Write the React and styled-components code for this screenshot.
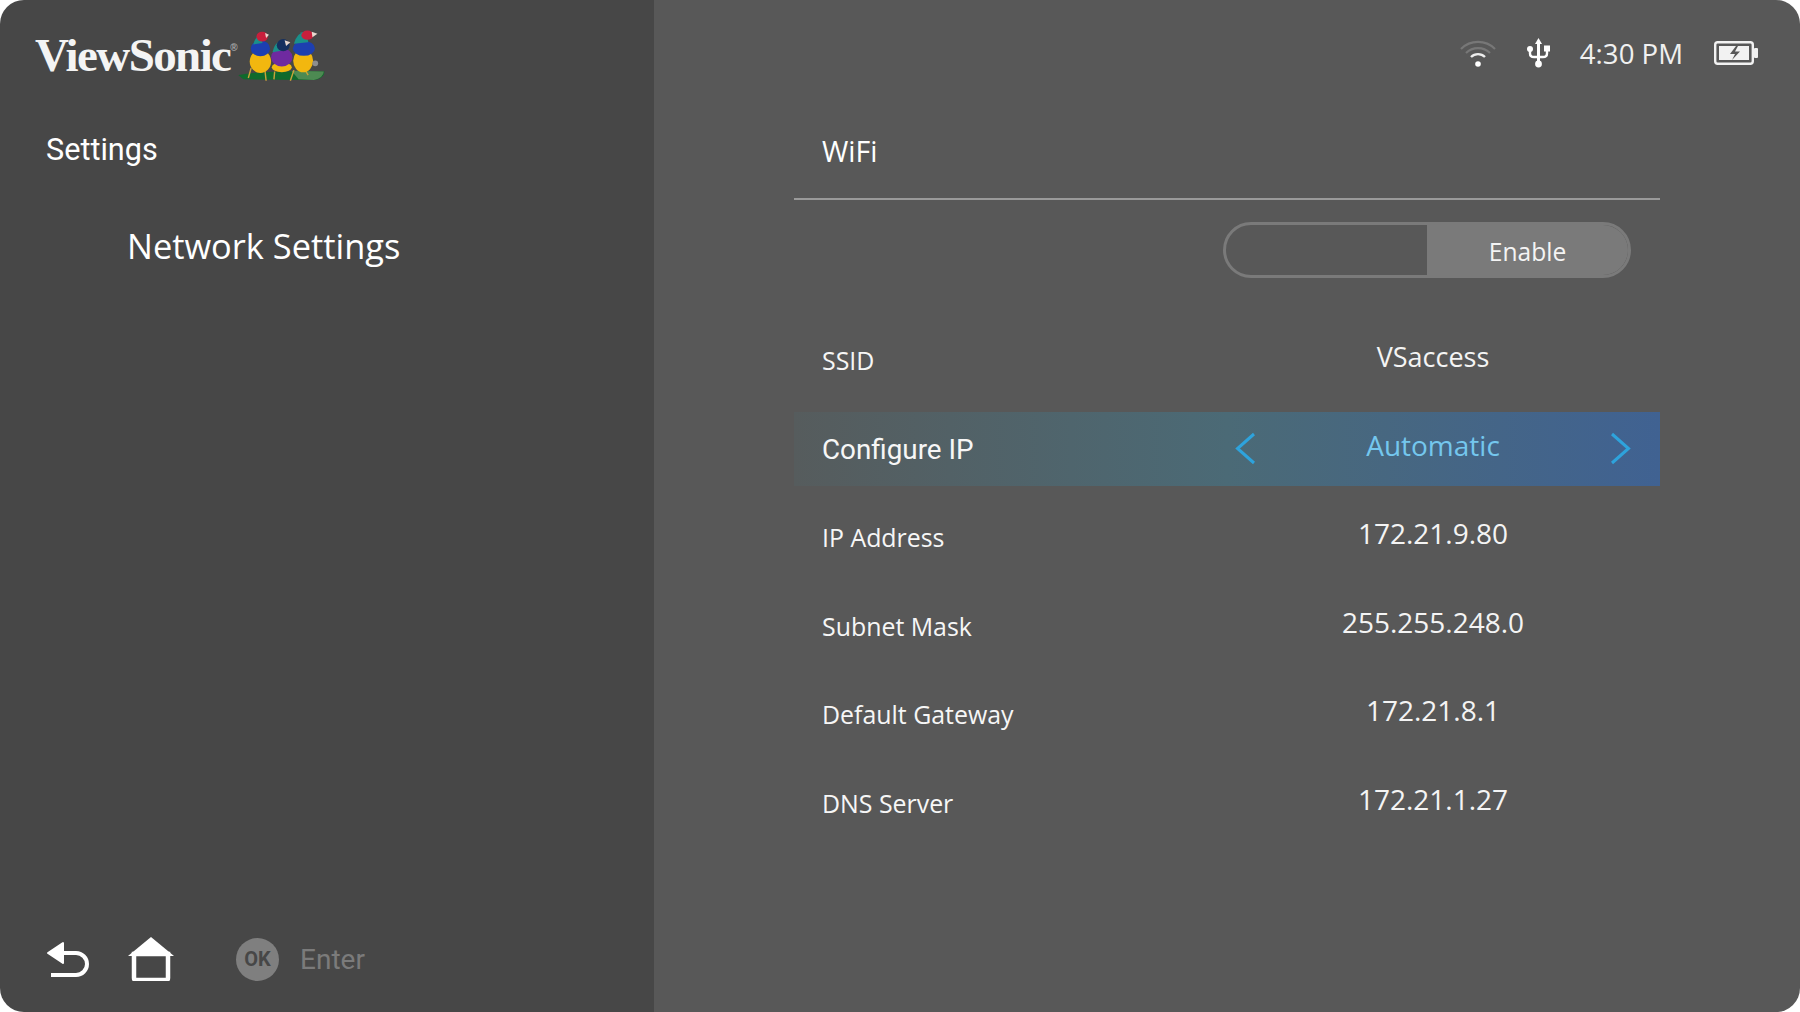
import React from "react";
import styled, { createGlobalStyle } from "styled-components";

const Global = createGlobalStyle`
  html, body {
    margin: 0;
    padding: 0;
    background: #fff;
  }
`;

const Screen = styled.div`
  display: grid;
  grid-template-columns: 654px 1fr;
  width: 1800px;
  height: 1012px;
  border-radius: 24px;
  overflow: hidden;
  color: #fff;
  font-family: "Open Sans", sans-serif;
`;

const Sidebar = styled.aside`
  display: flex;
  flex-direction: column;
  background: #474747;
`;

const LogoBar = styled.div`
  display: flex;
  align-items: center;
  height: 106px;
  padding: 3px 0 0 35px;
  box-sizing: border-box;
`;

const LogoText = styled.span`
  font-family: "Liberation Serif", serif;
  font-weight: 700;
  font-size: 47px;
  letter-spacing: -1.6px;
  color: #f4f4f4;
`;

const LogoMark = styled.sup`
  font-family: "Liberation Sans", sans-serif;
  font-size: 10px;
  color: #aaa;
  letter-spacing: 0;
  vertical-align: 20px;
  line-height: 0;
`;

const BirdsSvg = styled.svg`
  display: block;
  margin: 2px 0 0 -2px;
`;

const SectionTitle = styled.div`
  margin: 24px 0 0 46px;
  font-family: Roboto, sans-serif;
  font-size: 30.6px;
  line-height: 40px;
`;

const SubTitle = styled.div`
  margin: 52px 0 0 127px;
  font-size: 34.4px;
  line-height: 48px;
`;

const Footer = styled.div`
  display: flex;
  align-items: center;
  margin-top: auto;
  height: 46px;
  padding: 0 0 30px 46px;
`;

const FooterIcon = styled.svg`
  display: block;
  margin-right: ${(p) => p.$gap}px;
`;

const OkBadge = styled.span`
  display: flex;
  align-items: center;
  justify-content: center;
  width: 43px;
  height: 43px;
  border-radius: 50%;
  background: #7f7f7f;
  color: #474747;
  font-family: Roboto, sans-serif;
  font-weight: 700;
  font-size: 20px;
`;

const Hint = styled.span`
  margin-left: 21px;
  font-family: Roboto, sans-serif;
  font-size: 28px;
  color: #7b7b7b;
`;

const Main = styled.main`
  display: flex;
  flex-direction: column;
  background: #585858;
`;

const StatusBar = styled.div`
  display: flex;
  align-items: center;
  justify-content: flex-end;
  height: 106px;
  padding-right: 42px;
`;

const StatusIcon = styled.svg`
  display: block;
  margin-left: ${(p) => p.$left}px;
`;

const Clock = styled.span`
  margin-left: 30px;
  font-size: 27.6px;
  color: #f0f0f0;
`;

const Content = styled.section`
  margin: 0 140px;
`;

const Heading = styled.div`
  display: flex;
  align-items: center;
  height: 94px;
  padding: 0 0 2px 28px;
  box-sizing: border-box;
  border-bottom: 2px solid #9a9a9a;
  font-size: 28.5px;
`;

const ToggleRow = styled.div`
  display: flex;
  justify-content: flex-end;
  margin: 22px 29px 45px 0;
`;

const Toggle = styled.div`
  display: grid;
  grid-template-columns: 1fr 201px;
  width: 408px;
  height: 56px;
  box-sizing: border-box;
  border: 3px solid #7a7a7a;
  border-radius: 28px;
  overflow: hidden;
`;

const ToggleOption = styled.div`
  display: flex;
  align-items: center;
  justify-content: center;
  padding-top: 3px;
  font-size: 24.6px;
  color: #f4f4f4;
  background: ${(p) => (p.$on ? "#7a7a7a" : "transparent")};
`;

const Rows = styled.div`
  display: grid;
  grid-auto-rows: 74px;
  row-gap: 14.6px;
`;

const Row = styled.div`
  display: grid;
  grid-template-columns: 429px 420px;
  align-items: center;
  background: ${(p) =>
    p.$active
      ? "linear-gradient(90deg, #565c5d 0%, #4b6a76 50%, #406292 100%)"
      : "transparent"};
`;

const Label = styled.span`
  padding: ${(p) => (p.$active ? 2 : 0)}px 0 0 28px;
  font-family: ${(p) => (p.$active ? "Roboto" : '"Open Sans"')}, sans-serif;
  font-size: ${(p) => (p.$active ? 27.8 : 24.9)}px;
  color: #f6f6f6;
`;

const Value = styled.div`
  display: flex;
  align-items: center;
  justify-content: ${(p) => (p.$active ? "space-between" : "center")};
  padding: 0 12px;
  color: ${(p) => (p.$active ? "#74c7ee" : "#f4f4f4")};
`;

const ValueText = styled.span`
  position: relative;
  top: -4px;
  font-size: ${(p) => p.$size || 28}px;
`;

const Arrow = ({ flip }) => (
  <svg width="21" height="33" viewBox="0 0 21 33" fill="none">
    <path
      d={flip ? "M2 2 L18.5 16.5 L2 31" : "M19 2 L2.5 16.5 L19 31"}
      stroke="#2ea3dc"
      strokeWidth="3"
    />
  </svg>
);

const Birds = () => (
  <BirdsSvg width="93" height="57" viewBox="50 25 260 160">
    <path d="M56 160 Q120 146 298 150 Q296 170 270 174 L70 172 Z" fill="#0f6a2c" />
    <path d="M205 148 L296 150 Q295 168 268 174 L225 172 Z" fill="#4d8a52" />
    <g stroke="#c9a23a" strokeWidth="4" fill="none">
      <path d="M92 140 L84 168 M130 140 L134 176 M158 150 L156 172 M212 146 L202 176 M240 140 L252 160" />
    </g>
    <ellipse cx="118" cy="122" rx="30" ry="32" fill="#f2b70f" />
    <ellipse cx="118" cy="85" rx="27" ry="22" fill="#1d3fb0" />
    <path d="M98 74 Q104 50 118 50 L124 70 Z" fill="#1a8f8a" />
    <ellipse cx="123" cy="52" rx="16" ry="14" fill="#c81f3c" />
    <path d="M131 42 L142 47 L134 56 Z" fill="#e8d9d0" />
    <ellipse cx="238" cy="120" rx="28" ry="32" fill="#f2b70f" />
    <ellipse cx="240" cy="85" rx="31" ry="21" fill="#1d3fb0" />
    <path d="M212 72 Q220 40 248 36 L252 68 Z" fill="#1a8f8a" />
    <ellipse cx="250" cy="48" rx="17" ry="13" fill="#c81f3c" />
    <path d="M262 38 L278 44 L264 54 Z" fill="#e8d9d0" />
    <ellipse cx="178" cy="138" rx="28" ry="14" fill="#f2b70f" />
    <ellipse cx="178" cy="110" rx="30" ry="26" fill="#6f2aa0" />
    <path d="M152 96 Q158 70 172 66 L176 92 Z" fill="#1a8f8a" />
    <ellipse cx="182" cy="76" rx="18" ry="17" fill="#15305f" />
    <path d="M186 62 L202 68 L190 78 Z" fill="#e8d9d0" />
    <circle cx="272" cy="127" r="8" fill="#8e8e8e" />
  </BirdsSvg>
);

const rows = [
  { label: "SSID", value: "VSaccess", size: 27 },
  { label: "Configure IP", value: "Automatic", active: true },
  { label: "IP Address", value: "172.21.9.80" },
  { label: "Subnet Mask", value: "255.255.248.0" },
  { label: "Default Gateway", value: "172.21.8.1" },
  { label: "DNS Server", value: "172.21.1.27" },
];

export default function App() {
  return (
    <>
      <Global />
      <Screen>
        <Sidebar>
          <LogoBar>
            <LogoText>
              ViewSonic<LogoMark>®</LogoMark>
            </LogoText>
            <Birds />
          </LogoBar>
          <SectionTitle>Settings</SectionTitle>
          <SubTitle>Network Settings</SubTitle>
          <Footer>
            <FooterIcon $gap={38} width="44" height="40" viewBox="0 0 44 40" fill="none">
              <path d="M2 14 L17 4 L17 24 Z" fill="#fff" stroke="#fff" strokeWidth="2" strokeLinejoin="round" />
              <path d="M16 14 H30 A11 11 0 0 1 30 36 H5" stroke="#fff" strokeWidth="4" />
            </FooterIcon>
            <FooterIcon $gap={62} width="46" height="44" viewBox="0 0 46 44" fill="none">
              <path d="M23 0 L46 19 L0 19 Z" fill="#fff" />
              <path d="M6 17 H40 V41 Q40 43 38 43 H8 Q6 43 6 41 Z" stroke="#fff" strokeWidth="4.5" fill="#474747" />
            </FooterIcon>
            <OkBadge>OK</OkBadge>
            <Hint>Enter</Hint>
          </Footer>
        </Sidebar>
        <Main>
          <StatusBar>
            <StatusIcon $left={0} width="36" height="28" viewBox="0 0 36 28" fill="none">
              <path d="M1 10 A24 24 0 0 1 35 10" stroke="#777" strokeWidth="2.2" />
              <path d="M6 14 A17 17 0 0 1 30 14" stroke="#777" strokeWidth="2.2" />
              <path d="M11 18 A10 10 0 0 1 25 18" stroke="#eee" strokeWidth="2.4" />
              <circle cx="18" cy="25" r="2.8" fill="#fff" />
            </StatusIcon>
            <StatusIcon $left={31} width="23" height="30" viewBox="0 0 23 30" fill="none">
              <path d="M11.5 0 L15 6 H8 Z" fill="#fff" />
              <path d="M11.5 5 V26" stroke="#fff" strokeWidth="3" />
              <circle cx="11.5" cy="26" r="3.4" fill="#fff" />
              <path d="M3 13 V15.5 Q3 19 7 19 H16 Q20 19 20 15.5 V11" stroke="#fff" strokeWidth="2.4" />
              <circle cx="3" cy="11" r="3" fill="#fff" />
              <rect x="17" y="7.5" width="6" height="6" fill="#fff" />
            </StatusIcon>
            <Clock>4:30 PM</Clock>
            <StatusIcon $left={31} width="44" height="24" viewBox="0 0 44 24" fill="none">
              <rect x="1.2" y="1.2" width="37.6" height="21.6" rx="2.5" stroke="#f2f2f2" strokeWidth="2.4" />
              <rect x="5" y="5" width="30" height="14" fill="#f2f2f2" />
              <path d="M22 5 L16 13 H21 L18 19 L26 10.5 H21 L24 5 Z" fill="#585858" />
              <rect x="40" y="7" width="4" height="10" rx="1" fill="#f2f2f2" />
            </StatusIcon>
          </StatusBar>
          <Content>
            <Heading>WiFi</Heading>
            <ToggleRow>
              <Toggle>
                <ToggleOption />
                <ToggleOption $on>Enable</ToggleOption>
              </Toggle>
            </ToggleRow>
            <Rows>
              {rows.map((r) => (
                <Row key={r.label} $active={r.active}>
                  <Label $active={r.active}>{r.label}</Label>
                  <Value $active={r.active}>
                    {r.active && <Arrow />}
                    <ValueText $size={r.size}>{r.value}</ValueText>
                    {r.active && <Arrow flip />}
                  </Value>
                </Row>
              ))}
            </Rows>
          </Content>
        </Main>
      </Screen>
    </>
  );
}
